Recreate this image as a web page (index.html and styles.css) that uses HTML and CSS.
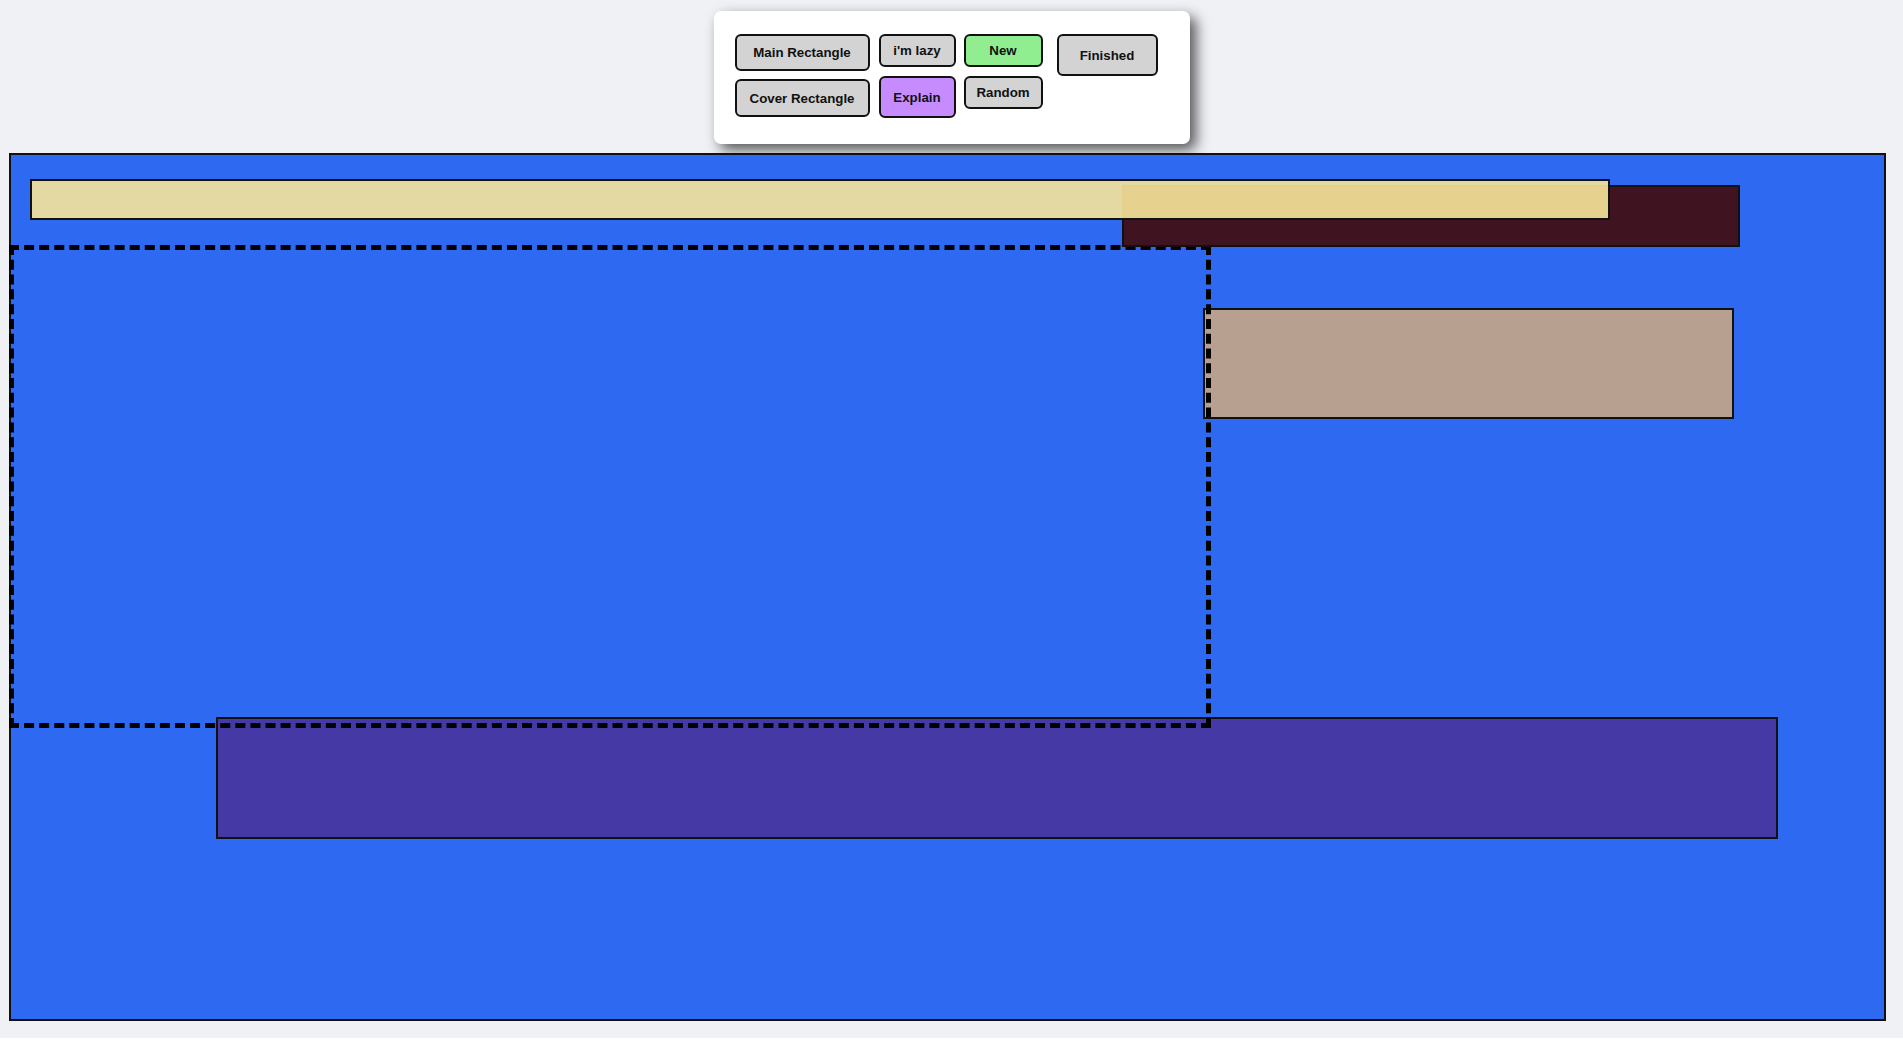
FILE: index.html
```html
<!DOCTYPE html>
<html lang="en">
<head>
<meta charset="utf-8">
<title>Rectangles</title>
<link rel="stylesheet" href="styles.css">
</head>
<body>
<div class="page">
  <div class="toolbar">
    <div class="col col-1">
      <button class="btn h37">Main Rectangle</button>
      <button class="btn h38">Cover Rectangle</button>
    </div>
    <div class="col col-2">
      <button class="btn h33">i'm lazy</button>
      <button class="btn h42 explain">Explain</button>
    </div>
    <div class="col col-3">
      <button class="btn h33 new">New</button>
      <button class="btn h33">Random</button>
    </div>
    <div class="col col-4">
      <button class="btn h42">Finished</button>
    </div>
  </div>
  <div class="canvas">
    <div class="rect purple" style="left:205px;top:562px;width:1562px;height:122px"></div>
    <div class="rect tan" style="left:1192px;top:153px;width:531px;height:111px"></div>
    <div class="rect dashed" style="left:-2px;top:90px;width:1202px;height:483px"></div>
    <div class="rect maroon" style="left:1111px;top:30px;width:618px;height:62px"></div>
    <div class="rect yellow" style="left:19px;top:24px;width:1580px;height:41px"></div>
  </div>
</div>
</body>
</html>
```

FILE: styles.css
```css
html {
  background: #ffffff;
}
body {
  margin: 0;
  font-family: "Liberation Sans", Arial, sans-serif;
}
.page {
  background: #f0f1f5;
  height: 1038px;
  padding-top: 11px;
  box-sizing: border-box;
  overflow: hidden;
}
.toolbar {
  width: 476px;
  height: 133px;
  margin: 0 auto;
  box-sizing: border-box;
  padding: 23px 0 0 21px;
  background: #ffffff;
  border-radius: 7px;
  box-shadow: 6px 6px 14px rgba(0, 0, 0, 0.65);
  display: flex;
  align-items: flex-start;
  gap: 8px;
}
.col {
  display: flex;
  flex-direction: column;
  gap: 9px;
}
.col-1 { width: 135px; gap: 8px; margin-right: 1px; }
.col-2 { width: 77px; }
.col-3 { width: 79px; }
.col-4 { width: 101px; margin-left: 6px; }
.btn {
  box-sizing: border-box;
  display: flex;
  align-items: center;
  justify-content: center;
  padding: 0 10px;
  font-family: "Liberation Sans", Arial, sans-serif;
  font-weight: bold;
  font-size: 13.3px;
  line-height: 15px;
  color: #111111;
  background: #d3d3d3;
  border: 2px solid #111111;
  border-radius: 6px;
  white-space: nowrap;
}
.h33 { height: 33px; }
.h37 { height: 37px; }
.h38 { height: 38px; }
.h42 { height: 42px; }
.new { background: #90ee90; }
.explain { background: #c68cfe; }

.canvas {
  position: relative;
  margin: 9px 0 0 9px;
  width: 1877px;
  height: 868px;
  box-sizing: border-box;
  background: #2d69f1;
  border: 2px solid #111111;
}
.rect {
  position: absolute;
  box-sizing: border-box;
  border: 2px solid #111111;
}
.purple { background: #4539a5; }
.tan { background: #b8a090; }
.dashed {
  border: 5px dashed #000000;
  background: transparent;
}
.maroon { background: #3f1420; }
.yellow { background: rgba(250, 229, 154, 0.9); }
```
